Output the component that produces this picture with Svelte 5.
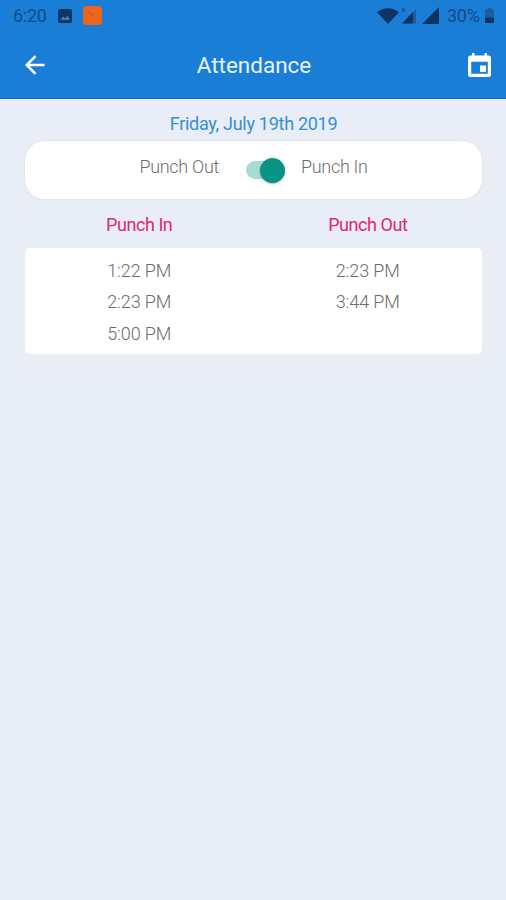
<script>
  const date = "Friday, July 19th 2019";
  const punchIns = ["1:22 PM", "2:23 PM", "5:00 PM"];
  const punchOuts = ["2:23 PM", "3:44 PM"];

  let punchedIn = $state(true);

  function toggle() {
    punchedIn = !punchedIn;
  }
</script>

<div class="screen">
  <header>
    <div class="status">
      <span class="clock">6:20</span>
      <svg class="photo" width="14" height="14" viewBox="0 0 15 15">
        <rect width="15" height="15" rx="2" fill="#0c3562" />
        <path d="M2.5 11.5 5.5 8l2 2.2L10 7.2l3 4.3z" fill="#3f86c8" />
      </svg>
      <svg class="app-badge" width="19" height="19" viewBox="0 0 19 19">
        <rect width="19" height="19" rx="3.5" fill="#ec6518" />
        <path d="M5 5.5 9.5 8l1.2 2.5-3.2-2.2z" fill="#a95b45" />
      </svg>
      <svg class="wifi" width="22" height="16" viewBox="0 0 22 16">
        <path d="M0 4.3C6.5-1.1 15.5-1.1 22 4.3L11 16z" fill="#0c3562" />
      </svg>
      <svg class="signal" width="18" height="17" viewBox="0 0 18 17">
        <path d="M17 2v14.5H3z" fill="#1a5c9f" />
        <path d="M14 5v11.5H3z" fill="#0c3562" />
        <path d="m2.7.7 3.6 4.6M6.3.7 2.7 5.3" stroke="#124a86" stroke-width="1" />
      </svg>
      <svg class="signal-full" width="17" height="17" viewBox="0 0 17 17">
        <path d="M17 0v17H0z" fill="#0c3562" />
      </svg>
      <span class="percent">30%</span>
      <svg class="battery" width="9" height="15" viewBox="0 0 9 15">
        <path d="M2.5 0h4v1.5H9V10H0V1.5h2.5z" fill="#1a5c9f" />
        <path d="M0 9.5h9V14a1 1 0 0 1-1 1H1a1 1 0 0 1-1-1z" fill="#0c3562" />
      </svg>
    </div>
    <div class="toolbar">
      <button class="icon" aria-label="Back">
        <svg width="20" height="20" viewBox="0 0 20 20">
          <path d="M19.5 10H2M10.5 1.2 1.7 10l8.8 8.8" fill="none" stroke="#fff" stroke-width="2.5" />
        </svg>
      </button>
      <h1>Attendance</h1>
      <button class="icon" aria-label="Choose date">
        <svg width="23" height="24" viewBox="0 0 23 24">
          <path
            d="M4 0h2.500v2.500h10V0H19v2.500h1.500A2.500 2.500 0 0 1 23 5v16.500a2.500 2.500 0 0 1-2.500 2.500h-18A2.500 2.500 0 0 1 0 21.500V5a2.500 2.500 0 0 1 2.500-2.500H4zM3.200 8.700v12h16.600v-12z"
            fill="#fff"
            fill-rule="evenodd"
          />
          <path d="M12 12.500h6V19h-6z" fill="#fff" />
        </svg>
      </button>
    </div>
  </header>

  <main>
    <p class="date">{date}</p>

    <div class="card punch">
      <span class="label left">Punch Out</span>
      <button
        class="switch"
        class:off={!punchedIn}
        role="switch"
        aria-checked={punchedIn}
        aria-label="Punch in"
        onclick={toggle}
      >
        <span class="thumb"></span>
      </button>
      <span class="label right">Punch In</span>
    </div>

    <div class="columns heads">
      <span>Punch In</span>
      <span>Punch Out</span>
    </div>

    <div class="card columns times">
      <ul>
        {#each punchIns as time}
          <li>{time}</li>
        {/each}
      </ul>
      <ul>
        {#each punchOuts as time}
          <li>{time}</li>
        {/each}
      </ul>
    </div>
  </main>
</div>

<style>
  :global(body) {
    margin: 0;
  }

  .screen {
    height: 900px;
    overflow: hidden;
    background: #e9edf5;
    font-family: Roboto, sans-serif;
    font-size: 18px;
    color: #6c6c6c;
  }

  header {
    box-sizing: border-box;
    height: 99px;
    background: #1b7ed6;
    border-bottom: 1px solid #1268b8;
  }

  .status {
    display: flex;
    align-items: center;
    height: 31px;
    padding: 0 12px 0 13px;
    letter-spacing: -0.3px;
    color: #124a86;
  }

  .status svg {
    flex: none;
  }

  .clock {
    width: 33px;
  }

  .photo {
    margin-left: 12px;
  }

  .app-badge {
    margin-left: 11px;
  }

  .wifi {
    margin-left: auto;
  }

  .signal-full {
    margin-left: 5px;
  }

  .percent {
    width: 33px;
    margin-left: 8px;
  }

  .battery {
    margin-left: 5px;
  }

  .toolbar {
    display: flex;
    align-items: center;
    justify-content: space-between;
    height: 67px;
    padding: 0 15px 0 25px;
  }

  h1 {
    margin: 0 5px 0 0;
    font-size: 22.5px;
    font-weight: 400;
    color: #e6f3fd;
  }

  button {
    padding: 0;
    border: 0;
    background: none;
  }

  .icon {
    display: flex;
  }

  main {
    padding: 13px 24px 0 25px;
  }

  .date {
    margin: 0;
    line-height: 24px;
    height: 29px;
    text-align: center;
    letter-spacing: -0.28px;
    color: #3690d3;
  }

  .card {
    background: #fff;
  }

  .punch {
    display: flex;
    justify-content: center;
    height: 58px;
    border-radius: 20px;
    box-shadow: 0 0 1px 1px #e3e5e9;
  }

  .label {
    line-height: 51px;
    font-weight: 300;
    letter-spacing: -0.3px;
  }

  .left {
    width: 194px;
    text-align: right;
  }

  .right {
    width: 181px;
  }

  .switch {
    display: flex;
    align-items: center;
    justify-content: flex-end;
    width: 39px;
    height: 18px;
    margin: 20px 16px 0 27px;
    border-radius: 9px;
    background: #a6dbd3;
  }

  .switch.off {
    justify-content: flex-start;
    background: #b9b9b9;
  }

  .thumb {
    width: 25px;
    height: 25px;
    border-radius: 50%;
    background: #079485;
    box-shadow: 0 1px 2px rgba(0, 0, 0, 0.3);
  }

  .off .thumb {
    background: #fafafa;
  }

  .columns {
    display: grid;
    grid-template-columns: 1fr 1fr;
    text-align: center;
  }

  .heads {
    height: 49px;
    line-height: 51px;
    letter-spacing: -0.45px;
    color: #dc2878;
  }

  .times {
    box-sizing: border-box;
    height: 106px;
    padding-top: 7px;
    border-radius: 5px;
    line-height: 31.4px;
    font-weight: 300;
    letter-spacing: -0.1px;
  }

  ul {
    margin: 0;
    padding: 0;
    list-style: none;
  }
</style>
